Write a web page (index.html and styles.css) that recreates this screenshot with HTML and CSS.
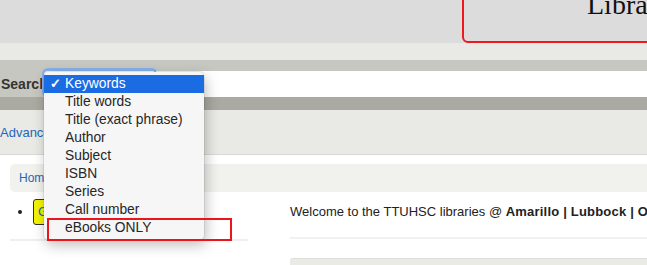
FILE: index.html
```html
<!DOCTYPE html>
<html lang="en">
<head>
    <meta charset="UTF-8">
    <meta name="viewport" content="width=device-width, initial-scale=1.0">
    <title>TTUHSC Libraries Catalog</title>
    <link rel="stylesheet" href="styles.css">
</head>
<body>
    <header class="masthead">
        <div class="brand">Libraries of the Health Sciences</div>
    </header>
    <div class="strip"></div>

    <div class="searchbar">
        <label class="search-label" for="idx">Search</label>
        <div class="select" id="idx"></div>
        <div class="search-input"></div>
    </div>
    <div class="searchbar-base"></div>

    <div class="subnav">
        <a href="#">Advanced search</a>
    </div>

    <div class="main">
        <nav class="breadcrumb"><a href="#">Home</a></nav>

        <div class="columns">
            <div class="left-col">
                <ul class="quick-links">
                    <li><span class="yellow-btn">Get help</span></li>
                </ul>
            </div>
            <div class="right-col">
                <p class="welcome">Welcome to the TTUHSC libraries @ <b>Amarillo | Lubbock | Odessa | El Paso</b></p>
                <div class="news"></div>
            </div>
        </div>
    </div>

    <!-- open select menu -->
    <ul class="select-menu">
        <li class="selected"><span class="check">&#10003;</span>Keywords</li>
        <li>Title words</li>
        <li>Title (exact phrase)</li>
        <li>Author</li>
        <li>Subject</li>
        <li>ISBN</li>
        <li>Series</li>
        <li>Call number</li>
        <li>eBooks ONLY</li>
    </ul>
    <div class="highlight-box"></div>
</body>
</html>
```

FILE: styles.css
```css
body {
    margin: 0;
    font-family: "Liberation Sans", Arial, sans-serif;
    font-size: 13px;
    color: #222;
    background-color: #fff;
    overflow: hidden;
    width: 647px;
}
a {
    color: #2367b8;
    text-decoration: none;
}
.masthead {
    height: 43px;
    background-color: #dcdcdc;
    display: flex;
    align-items: flex-end;
    overflow: hidden;
}
.brand {
    margin-left: 462px;
    height: 60px;
    flex: 0 0 400px;
    box-sizing: border-box;
    border: 2px solid #f2161f;
    border-bottom-left-radius: 6px;
    padding-left: 123px;
    font-family: "Liberation Serif", "Times New Roman", serif;
    font-size: 28px;
    line-height: 30px;
    color: #111;
    white-space: nowrap;
    overflow: hidden;
    padding-top: 5px;
}
.strip {
    height: 17px;
    background-color: #e9e9e5;
}
.searchbar {
    height: 37px;
    background-color: #c7c7c1;
    display: flex;
    align-items: flex-end;
}
.search-label {
    font-weight: bold;
    font-size: 14px;
    color: #333;
    padding-left: 1px;
    width: 43px;
    overflow: hidden;
    align-self: center;
    margin-top: 10px;
}
.select {
    width: 112px;
    height: 26px;
    background-color: #fff;
    border-radius: 4px;
    box-shadow: 0 -1px 0 2px #86aee9;
}
.search-input {
    flex: 1;
    height: 26px;
    background-color: #fff;
}
.searchbar-base {
    height: 13px;
    background-color: #aaa9a2;
}
.subnav {
    height: 44px;
    background-color: #e9e9e5;
    border-bottom: 1px solid #dadad5;
    display: flex;
    align-items: center;
}
.subnav a {
    font-size: 13px;
    white-space: nowrap;
}
.main {
    padding-top: 9px;
}
.breadcrumb {
    margin-left: 10px;
    height: 28px;
    background-color: #f1f1ee;
    border-radius: 5px 0 0 5px;
    display: flex;
    align-items: center;
    padding-left: 9px;
    font-size: 12px;
}
.columns {
    display: flex;
    gap: 42px;
    padding-left: 10px;
}
.left-col {
    width: 238px;
    flex: none;
    height: 47px;
    border-bottom: 2px solid #efefef;
}
.quick-links {
    margin: 7px 0 0;
    padding-left: 23px;
}
.quick-links li {
    line-height: 25px;
}
.yellow-btn {
    display: inline-block;
    background-color: #f4f400;
    border: 1px solid #333;
    border-radius: 3px;
    padding: 0 4px;
    color: #2367b8;
    line-height: 24px;
}
.right-col {
    flex: 1;
}
.welcome {
    margin: 0;
    height: 47px;
    box-sizing: border-box;
    padding-top: 12px;
    border-bottom: 2px solid #f1f1f1;
    white-space: nowrap;
    color: #222;
}
.welcome b {
    letter-spacing: 0.2px;
}
.news {
    margin-top: 19px;
    height: 20px;
    background-color: #ebebe6;
    border-top: 1px solid #dededa;
    border-radius: 3px 0 0 0;
}
.select-menu {
    position: absolute;
    left: 44px;
    top: 72px;
    width: 160px;
    margin: 0;
    padding: 3px 0;
    list-style: none;
    background-color: #f6f6f6;
    border-radius: 5px;
    box-shadow: 0 0 0 1px rgba(0, 0, 0, 0.07), 2px 5px 14px rgba(0, 0, 0, 0.26);
}
.select-menu li {
    height: 18px;
    line-height: 18px;
    padding-left: 21px;
    position: relative;
    font-size: 13.8px;
    color: #262626;
    white-space: nowrap;
}
.select-menu li.selected {
    background-color: #1b6be3;
    color: #fff;
}
.check {
    position: absolute;
    left: 6px;
    font-size: 13px;
    font-weight: bold;
}
.highlight-box {
    position: absolute;
    left: 47px;
    top: 218px;
    width: 181px;
    height: 19px;
    border: 2px solid #ea161c;
}
```
